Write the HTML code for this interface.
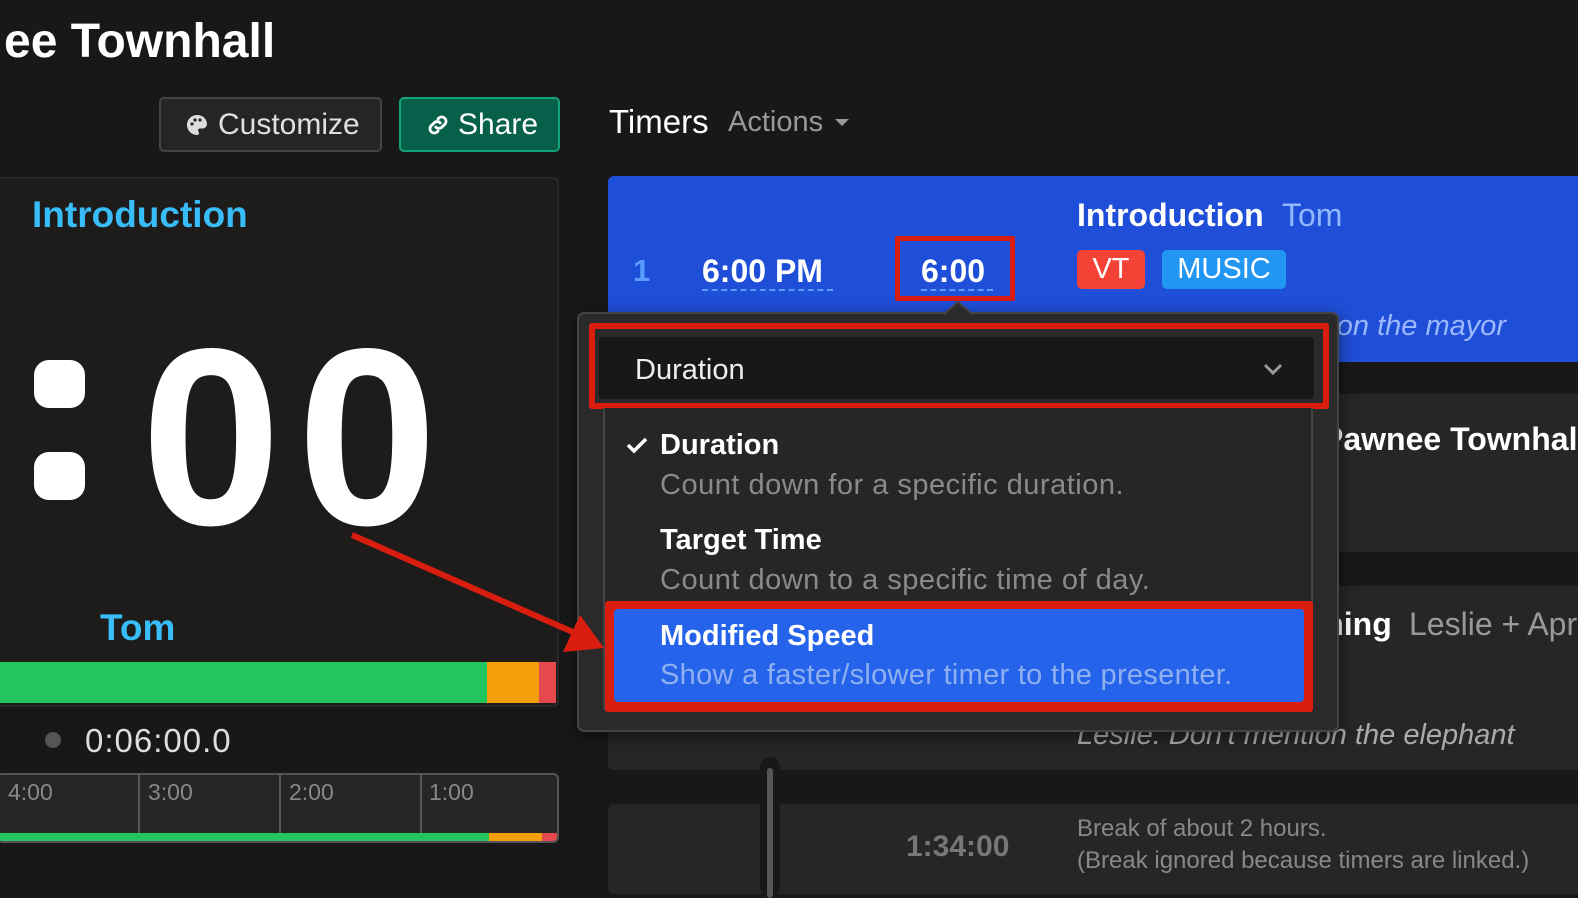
<!DOCTYPE html>
<html><head><meta charset="utf-8"><style>
*{margin:0;padding:0;box-sizing:border-box}
body{width:1578px;height:884px;overflow:hidden;background:#181818;font-family:"Liberation Sans",sans-serif;position:relative;color:#fff}
.a{position:absolute;white-space:nowrap}
.b{font-weight:bold}
</style></head><body>
<div class="a b" style="left:4px;top:14px;font-size:48px;color:#fff">ee Townhall</div>

<div class="a" style="left:159px;top:97px;width:223px;height:55px;background:#252525;border:2px solid #444;border-radius:5px"></div>
<svg class="a" style="left:185px;top:113px" width="24" height="24" viewBox="0 0 24 24"><path d="M12 2C6.5 2 2 6.5 2 12s4.5 10 10 10c1.5 0 2-1 2-2 0-1.2-1-1.5-1-2.7 0-1 .8-1.8 2-1.8h2.5C20 15.5 22 13.5 22 11 22 6 17.5 2 12 2z" fill="#ddd"/><circle cx="7" cy="11" r="1.6" fill="#252525"/><circle cx="10" cy="7" r="1.6" fill="#252525"/><circle cx="15" cy="7" r="1.6" fill="#252525"/></svg>
<div class="a" style="left:218px;top:108px;font-size:30px;color:#e0e0e0">Customize</div>
<div class="a" style="left:399px;top:97px;width:161px;height:55px;background:#07614a;border:2px solid #14a37a;border-radius:5px"></div>
<svg class="a" style="left:425px;top:112px" width="26" height="26" viewBox="0 0 24 24" fill="none" stroke="#fff" stroke-width="2.6" stroke-linecap="round"><path d="M10 14a4 4 0 0 0 5.6 0l3-3a4 4 0 0 0-5.6-5.6l-1 1"/><path d="M14 10a4 4 0 0 0-5.6 0l-3 3a4 4 0 0 0 5.6 5.6l1-1"/></svg>
<div class="a" style="left:458px;top:108px;font-size:30px;color:#fff">Share</div>

<div class="a" style="left:-4px;top:177px;width:563px;height:530px;background:#1e1b1b;border:2px solid #2a2828;border-radius:6px"></div>
<div class="a b" style="left:32px;top:194px;font-size:37px;color:#38bdf8">Introduction</div>
<div class="a" style="left:34px;top:360px;width:51px;height:48px;background:#fff;border-radius:15px"></div>
<div class="a" style="left:34px;top:452px;width:51px;height:48px;background:#fff;border-radius:15px"></div>
<div class="a b" style="left:141px;top:312px;font-size:252px;line-height:1;color:#fff;letter-spacing:16px">00</div>
<div class="a b" style="left:100px;top:607px;font-size:37px;color:#38bdf8">Tom</div>
<div class="a" style="left:0;top:662px;width:487px;height:41px;background:#22c55e"></div>
<div class="a" style="left:487px;top:662px;width:52px;height:41px;background:#f59e0b"></div>
<div class="a" style="left:539px;top:662px;width:17px;height:41px;background:#e5484d"></div>

<div class="a" style="left:45px;top:732px;width:16px;height:16px;border-radius:50%;background:#555"></div>
<div class="a" style="left:85px;top:722px;font-size:33px;color:#ddd;letter-spacing:1px">0:06:00.0</div>
<div class="a" style="left:-4px;top:773px;width:563px;height:70px;background:#262626;border:2px solid #555;border-radius:6px;overflow:hidden">
<div class="a" style="left:140px;top:0;width:2px;height:70px;background:#555"></div>
<div class="a" style="left:281px;top:0;width:2px;height:70px;background:#555"></div>
<div class="a" style="left:422px;top:0;width:2px;height:70px;background:#555"></div>
<div class="a" style="left:10px;top:4px;font-size:23px;color:#888">4:00</div>
<div class="a" style="left:150px;top:4px;font-size:23px;color:#888">3:00</div>
<div class="a" style="left:291px;top:4px;font-size:23px;color:#888">2:00</div>
<div class="a" style="left:431px;top:4px;font-size:23px;color:#888">1:00</div>
<div class="a" style="left:0;top:58px;width:491px;height:8px;background:#22c55e"></div>
<div class="a" style="left:491px;top:58px;width:53px;height:8px;background:#f59e0b"></div>
<div class="a" style="left:544px;top:58px;width:20px;height:8px;background:#e5484d"></div>
</div>

<div class="a" style="left:609px;top:103px;font-size:33px;color:#fff">Timers</div>
<div class="a" style="left:728px;top:106px;font-size:29px;color:#999">Actions</div>
<svg class="a" style="left:834px;top:118px" width="16" height="10"><path d="M1 1h14L8 8z" fill="#999"/></svg>

<div class="a" style="left:608px;top:176px;width:980px;height:186px;background:#1f4fd8;border-radius:6px"></div>
<div class="a b" style="left:633px;top:253px;font-size:31px;color:#5a9cff">1</div>
<div class="a b" style="left:702px;top:253px;font-size:32px;color:#fff">6:00 PM</div>
<div class="a" style="left:702px;top:289px;width:131px;border-top:2px dashed #5a9cff"></div>
<div class="a" style="left:895px;top:236px;width:120px;height:65px;border:5px solid #d91e10;border-radius:2px"></div>
<div class="a b" style="left:921px;top:253px;font-size:32px;color:#fff">6:00</div>
<div class="a" style="left:921px;top:289px;width:72px;border-top:2px dashed #5a9cff"></div>
<div class="a b" style="left:1077px;top:197px;font-size:32px;color:#fff">Introduction</div>
<div class="a" style="left:1282px;top:197px;font-size:32px;color:#93b7ff">Tom</div>
<div class="a" style="left:1077px;top:250px;width:68px;height:39px;background:#f44336;border-radius:5px;font-size:29px;line-height:39px;text-align:center">VT</div>
<div class="a" style="left:1162px;top:250px;width:124px;height:39px;background:#2196f3;border-radius:5px;font-size:29px;line-height:39px;text-align:center">MUSIC</div>
<div class="a" style="left:1290px;top:310px;font-size:29px;font-style:italic;color:#9bb8ff">ention the mayor</div>

<div class="a" style="left:608px;top:394px;width:980px;height:158px;background:#262626;border-radius:6px"></div>
<div class="a b" style="left:1322px;top:421px;font-size:32px;color:#fff">Pawnee Townhall</div>
<div class="a" style="left:608px;top:586px;width:980px;height:184px;background:#262626;border-radius:6px"></div>
<div class="a b" style="left:1262px;top:606px;font-size:32px;color:#fff">Opening</div>
<div class="a" style="left:1409px;top:606px;font-size:32px;color:#999">Leslie + April</div>
<div class="a" style="left:1077px;top:719px;font-size:29px;font-style:italic;color:#aaa">Leslie: Don't mention the elephant</div>
<div class="a" style="left:608px;top:804px;width:980px;height:90px;background:#262626;border-radius:6px"></div>
<div class="a b" style="left:906px;top:830px;font-size:30px;color:#777">1:34:00</div>
<div class="a" style="left:1077px;top:815px;font-size:24px;color:#888">Break of about 2 hours.</div>
<div class="a" style="left:1077px;top:847px;font-size:24px;color:#888">(Break ignored because timers are linked.)</div>
<div class="a" style="left:760px;top:757px;width:20px;height:140px;background:#181818;border-radius:10px"></div>
<div class="a" style="left:767px;top:768px;width:6px;height:130px;background:#555;border-radius:3px"></div>

<div class="a" style="left:577px;top:312px;width:762px;height:420px;background:#2a2a2a;border:2px solid #444;border-radius:7px;box-shadow:0 4px 16px rgba(0,0,0,.5)"></div>
<svg class="a" style="left:944px;top:301px" width="30" height="14"><path d="M0 13L14 1L28 13" fill="#2a2a2a" stroke="#444" stroke-width="2"/></svg>
<div class="a" style="left:599px;top:337px;width:715px;height:62px;background:#181818;border-radius:4px"></div>
<div class="a" style="left:589px;top:323px;width:740px;height:86px;border:6px solid #d91e10;border-radius:3px"></div>
<div class="a" style="left:635px;top:354px;font-size:29px;color:#eee">Duration</div>
<svg class="a" style="left:1263px;top:362px" width="20" height="14" fill="none" stroke="#999" stroke-width="3"><path d="M2 3l8 8 8-8"/></svg>
<div class="a" style="left:603px;top:408px;width:710px;height:304px;background:#262626;border:2px solid #444;border-top:none;border-radius:0 0 5px 5px"></div>
<svg class="a" style="left:626px;top:436px" width="22" height="18" fill="none" stroke="#fff" stroke-width="3.5"><path d="M2 9l6 6L20 3"/></svg>
<div class="a b" style="left:660px;top:429px;font-size:29px;color:#fff">Duration</div>
<div class="a" style="left:660px;top:469px;font-size:29px;letter-spacing:.5px;color:#8a8a8a">Count down for a specific duration.</div>
<div class="a b" style="left:660px;top:524px;font-size:29px;color:#fff">Target Time</div>
<div class="a" style="left:660px;top:564px;font-size:29px;letter-spacing:.5px;color:#8a8a8a">Count down to a specific time of day.</div>
<div class="a" style="left:605px;top:601px;width:708px;height:111px;background:#d91e10;border-radius:3px"></div>
<div class="a" style="left:614px;top:609px;width:690px;height:93px;background:#2563eb;border-radius:4px"></div>
<div class="a b" style="left:660px;top:620px;font-size:29px;color:#fff">Modified Speed</div>
<div class="a" style="left:660px;top:659px;font-size:29px;letter-spacing:.3px;color:#8fb0f0">Show a faster/slower timer to the presenter.</div>

<svg class="a" style="left:0;top:0" width="1578" height="884"><line x1="352" y1="535" x2="575" y2="633" stroke="#d91e10" stroke-width="6"/><path d="M604 648L563 652L580 615z" fill="#d91e10"/></svg>
</body></html>
